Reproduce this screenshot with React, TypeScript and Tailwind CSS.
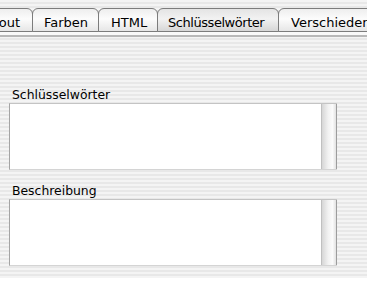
import React from "react";

const stripes =
  "bg-[repeating-linear-gradient(to_bottom,#f4f4f4_0px,#f4f4f4_2px,#e8e8e8_2px,#e8e8e8_4px)]";

function Tab({ label, selected, className = "" }: { label: string; selected?: boolean; className?: string }) {
  return (
    <div
      className={
        "shrink-0 h-[24px] pt-[3px] leading-[21px] text-[13px] text-black whitespace-nowrap border border-[#7c7c7c] rounded-t-[6px] -ml-px " +
        (selected
          ? "bg-[linear-gradient(to_bottom,#e4e4e4,#f2f2f2_45%,#d6d6d6)] "
          : "bg-[linear-gradient(to_bottom,#eeeeee,#fcfcfc_45%,#e6e6e6)] ") +
        className
      }
    >
      {label}
    </div>
  );
}

function Field({ label, labelClass, boxClass }: { label: string; labelClass: string; boxClass: string }) {
  return (
    <div className="flex flex-col">
      <div className={"h-[14px] leading-[14px] text-[12.4px] text-black pl-[3px] " + labelClass}>{label}</div>
      <div className={"flex w-[328px] bg-white border-l border-t border-b border-l-[#a4a4a4] border-t-[#c4c4c4] border-b-[#d4d4d4] " + boxClass}>
        <div className="flex-1" />
        <div className="w-[16px] h-full border-l border-r border-l-[#c0c0c0] border-r-[#9c9c9c] bg-[linear-gradient(to_right,#d6d6d6,#f2f2f2_45%,#fbfbfb_75%,#e2e2e2)]" />
      </div>
    </div>
  );
}

export default function App() {
  return (
    <div className="w-[367px] h-[285px] overflow-hidden bg-white font-['DejaVu_Sans',sans-serif]">
      <div className={"h-[278px] flex flex-col " + stripes}>
        <div className="pt-[8px] flex overflow-hidden">
          <Tab label="Layout" className="ml-[-36px] w-[69px] text-right pr-[12px]" />
          <Tab label="Farben" className="w-[67px] pl-[11px]" />
          <Tab label="HTML" className="w-[60px] pl-[12px]" />
          <Tab label="Schlüsselwörter" selected className="w-[122px] pl-[10px] tracking-[-0.45px]" />
          <Tab label="Verschieden" className="w-[110px] pl-[12px]" />
        </div>
        <div className="h-[3px] bg-[#f9f9f9]" />
        <div className="h-[2px] bg-[#b8b8b8]" />
        <div className="flex flex-col pl-[9px] pt-[51px]">
          <Field label="Schlüsselwörter" labelClass="mb-[1px]" boxClass="h-[67px]" />
          <div className="h-[14px]" />
          <Field label="Beschreibung" labelClass="mb-[1px]" boxClass="h-[67px]" />
        </div>
      </div>
    </div>
  );
}
